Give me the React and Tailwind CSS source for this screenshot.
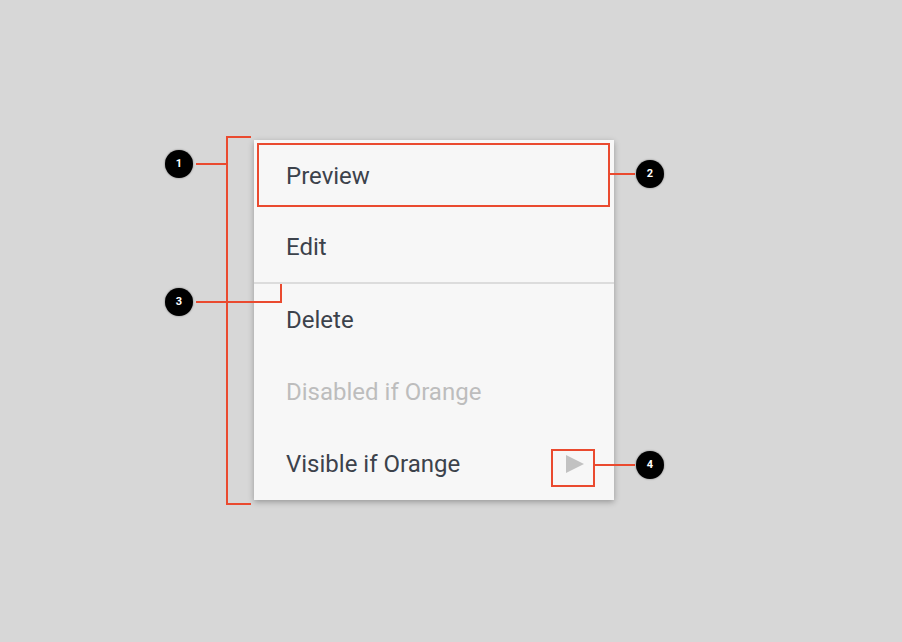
import React from 'react';

const RED = 'bg-[#ea4a2f]';

function Badge({ n, className }) {
  return (
    <div
      className={`absolute w-[28px] h-[28px] rounded-full bg-black flex items-center justify-center text-white text-[11px] font-bold shadow-[0_0_2px_rgba(0,0,0,0.5)] ${className}`}
    >
      {n}
    </div>
  );
}

const ITEMS = [
  { label: 'Preview' },
  { label: 'Edit', divider: true },
  { label: 'Delete' },
  { label: 'Disabled if Orange', disabled: true },
  { label: 'Visible if Orange', submenu: true },
];

export default function App() {
  return (
    <div className="relative w-[902px] h-[642px] bg-[#d7d7d7] overflow-hidden font-['Roboto','Liberation_Sans',sans-serif]">
      <div className="pt-[140px] pl-[254px]">
        <div className="w-[360px] bg-[#f7f7f7] shadow-[0_2px_6px_rgba(0,0,0,0.3)]">
          {ITEMS.map((it) => (
            <div
              key={it.label}
              className={`h-[72px] flex items-center justify-between pl-[32px] pr-[30px] text-[24px] ${
                it.disabled ? 'text-[#bdbdbd]' : 'text-[#3c424b]'
              } ${it.divider ? 'border-b-2 border-[#dcdcdc]' : ''}`}
            >
              <span>{it.label}</span>
              {it.submenu && (
                <svg width="18" height="18" viewBox="0 0 18 18">
                  <polygon points="0,0 18,9 0,18" fill="#c2c2c2" />
                </svg>
              )}
            </div>
          ))}
        </div>
      </div>

      {/* 1: whole menu */}
      <div className="absolute left-[226px] top-[136px] w-[25px] h-[369px] border-l-2 border-t-2 border-b-2 border-[#ea4a2f]" />
      <div className={`absolute left-[196px] top-[163px] w-[31px] h-[2px] ${RED}`} />
      <Badge n="1" className="left-[165px] top-[150px]" />

      {/* 3: divider */}
      <div className="absolute left-[196px] top-[284px] w-[86px] h-[19px] border-b-2 border-r-2 border-[#ea4a2f]" />
      <Badge n="3" className="left-[165px] top-[288px]" />

      {/* 2: highlighted item */}
      <div className="absolute left-[257px] top-[143px] w-[353px] h-[64px] border-2 border-[#ea4a2f]" />
      <div className={`absolute left-[609px] top-[173px] w-[26px] h-[2px] ${RED}`} />
      <Badge n="2" className="left-[636px] top-[160px]" />

      {/* 4: submenu arrow */}
      <div className="absolute left-[551px] top-[449px] w-[44px] h-[38px] border-2 border-[#ea4a2f]" />
      <div className={`absolute left-[594px] top-[464px] w-[41px] h-[2px] ${RED}`} />
      <Badge n="4" className="left-[636px] top-[451px]" />
    </div>
  );
}
